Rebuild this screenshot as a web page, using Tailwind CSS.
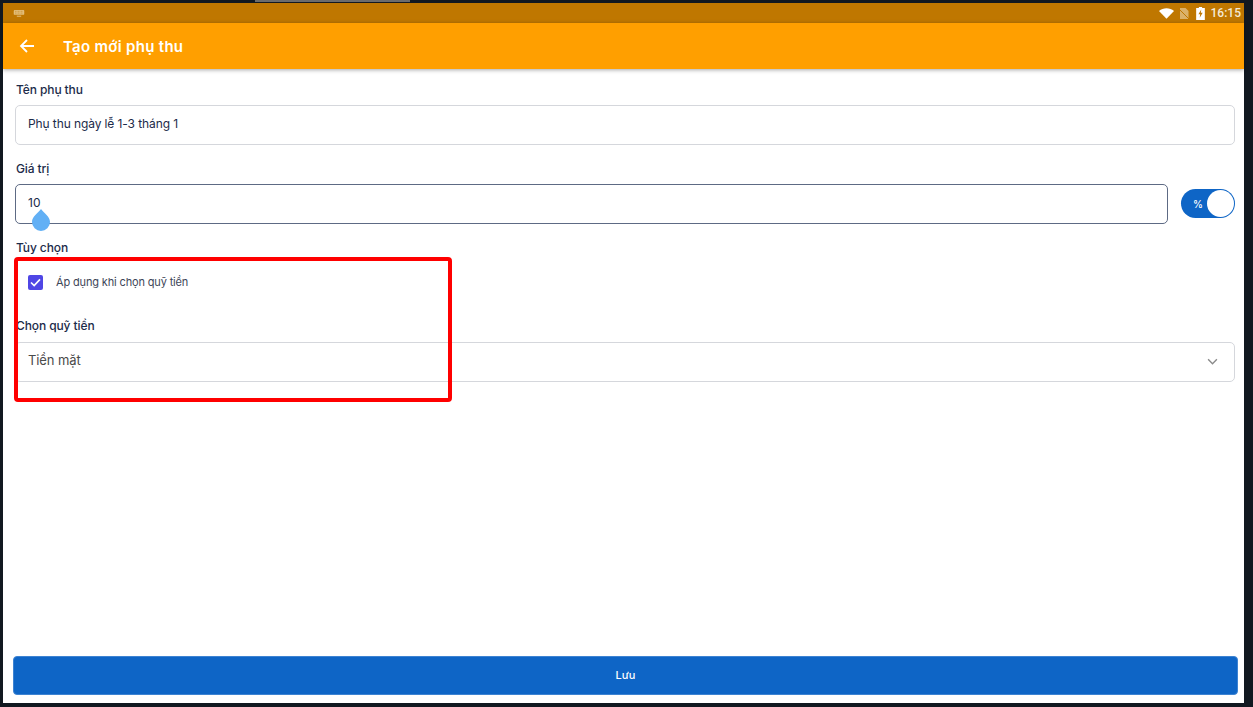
<!DOCTYPE html>
<html lang="vi">
<head>
<meta charset="utf-8">
<script src="https://cdn.jsdelivr.net/npm/@tailwindcss/browser@4"></script>
</head>
<body class="bg-[#111820]">
<div class="relative w-[1253px] h-[707px] overflow-hidden bg-[#111820] font-['Inter','Noto_Sans',sans-serif] pt-[3px] pl-[3px]">
  <div class="absolute left-[255px] top-0 w-[155px] h-[2px] bg-[#6b6b6b]"></div>
  <div class="relative w-[1241px] h-[700px] bg-white flex flex-col">
    <!-- status bar -->
    <div class="h-[20px] bg-[#bf7700] flex items-center shrink-0 pl-[10px] pr-[3px]">
      <svg width="12" height="7" viewBox="0 0 12 8" class="opacity-70"><rect x="0" y="0" width="12" height="5.5" rx="1" fill="#f2dcae"/><path d="M1.5 1.5h9M1.5 3.5h9" stroke="#bf7700" stroke-width=".6" stroke-dasharray="1 .7"/><rect x="3.5" y="6.5" width="5" height="1.2" fill="#f2dcae"/></svg>
      <div class="ml-auto flex items-center">
        <svg width="15" height="11" viewBox="0 0 14 10" class="mr-[5px]"><path d="M0 2.6C2 .9 4.4 0 7 0s5 .9 7 2.6L7 10z" fill="#fff"/></svg>
        <svg width="10" height="11" viewBox="0 0 10 11" class="mr-[7px]"><path d="M1 0h5.500L9.500 3v8H1z" fill="#e3c48e" opacity=".75"/><path d="M0 1l10 10" stroke="#bf7700" stroke-width="1"/></svg>
        <svg width="9" height="13" viewBox="0 0 8 12" class="mr-[6px]"><path d="M2.500 0h3v1H8v11H0V1h2.500z" fill="#fff"/><path d="M4.700 2.200L2.100 6.800h1.600L3.300 10l2.700-4.700H4.300z" fill="#bf7700"/></svg>
        <span class="text-[12px] leading-none font-medium text-[#f5ead6] font-['Roboto',sans-serif]">16:15</span>
      </div>
    </div>
    <!-- app bar -->
    <div class="h-[46px] bg-[#ff9f00] flex items-center shrink-0 shadow-[0_1px_4px_rgba(0,0,0,0.35)] z-10">
      <svg width="16" height="14" viewBox="0 0 16 14" class="ml-[16px]" fill="none" stroke="#fff" stroke-width="1.800"><path d="M15 7H2M8 1L2 7l6 6"/></svg>
      <span class="ml-[28px] text-[15px] font-semibold text-white leading-none tracking-[0.3px]">Tạo mới phụ thu</span>
    </div>
    <!-- form -->
    <div class="flex-1 flex flex-col pl-[12px] pr-[9px]">
      <label class="mt-[13px] pl-[1px] text-[12px] leading-[15px] font-medium text-[#1c2b4a] tracking-[-0.1px]">Tên phụ thu</label>
      <div class="mt-[8px] h-[40px] border border-[#d5d7dc] rounded-[5px] flex items-center pl-[12px] pb-[2px] text-[12px] text-[#1c2b4a] tracking-[-0.1px]">Phụ thu ngày lễ 1-3 tháng 1</div>

      <label class="mt-[16px] pl-[1px] text-[12px] leading-[15px] font-medium text-[#1c2b4a] tracking-[-0.1px]">Giá trị</label>
      <div class="mt-[7.500px] flex items-center">
        <div class="relative flex-1 h-[40px] border border-[#5d6a84] rounded-[5px] flex items-center pl-[12px] pb-[1px] text-[12px] text-[#1c2b4a]">10
          <svg width="18" height="22" viewBox="0 0 18 22" class="absolute left-[16px] top-[24px]"><path d="M9 0C12 4 18 7.500 18 13a9 9 0 0 1-18 0C0 7.500 6 4 9 0z" fill="#62b0f5"/></svg>
        </div>
        <div class="ml-[13px] w-[54px] h-[29px] rounded-full bg-[#0e65c6] flex items-center relative shrink-0">
          <span class="ml-[12px] text-[10px] font-medium text-white leading-none">%</span>
          <span class="absolute right-[1px] top-[1px] w-[27px] h-[27px] rounded-full bg-white"></span>
        </div>
      </div>

      <label class="mt-[16.500px] pl-[1px] text-[12px] leading-[15px] font-medium text-[#1c2b4a] tracking-[-0.1px]">Tùy chọn</label>
      <div class="mt-[19px] ml-[13px] flex items-center h-[16px]">
        <span class="w-[15px] h-[15px] bg-[#4f46e5] rounded-[2px] flex items-center justify-center">
          <svg width="11" height="9" viewBox="0 0 12 10" fill="none" stroke="#fff" stroke-width="1.800"><path d="M1 5l3.500 3.500L11 1.500"/></svg>
        </span>
        <span class="ml-[13px] text-[11px] text-[#3d4658] leading-none tracking-[-0.15px]">Áp dụng khi chọn quỹ tiền</span>
      </div>

      <label class="mt-[28px] pl-[1px] text-[12px] leading-[15px] font-medium text-[#1c2b4a] tracking-[-0.1px]">Chọn quỹ tiền</label>
      <div class="mt-[8.500px] h-[40px] border border-[#d5d7dc] rounded-[5px] flex items-center pl-[12px] pr-[16px] pb-[1px] text-[13px] text-[#4a4a4a] tracking-[-0.1px]">
        <span>Tiền mặt</span>
        <svg width="11" height="7" viewBox="0 0 12 8" class="ml-auto mt-[1px]" fill="none" stroke="#8a8a8a" stroke-width="1.600"><path d="M1 1.500l5 5 5-5"/></svg>
      </div>
    </div>
    <!-- save -->
    <div class="pl-[10px] pr-[6px] pb-[8px]">
      <button class="w-full h-[39px] bg-[#0e65c6] border border-[#3d83d2] rounded-[4px] text-[11px] font-medium text-white">Lưu</button>
    </div>
    <!-- red annotation -->
    <div class="absolute left-[11px] top-[254px] w-[438px] h-[145px] border-[4px] border-[#ff0000] rounded-[4px] pointer-events-none"></div>
  </div>
</div>
</body>
</html>
